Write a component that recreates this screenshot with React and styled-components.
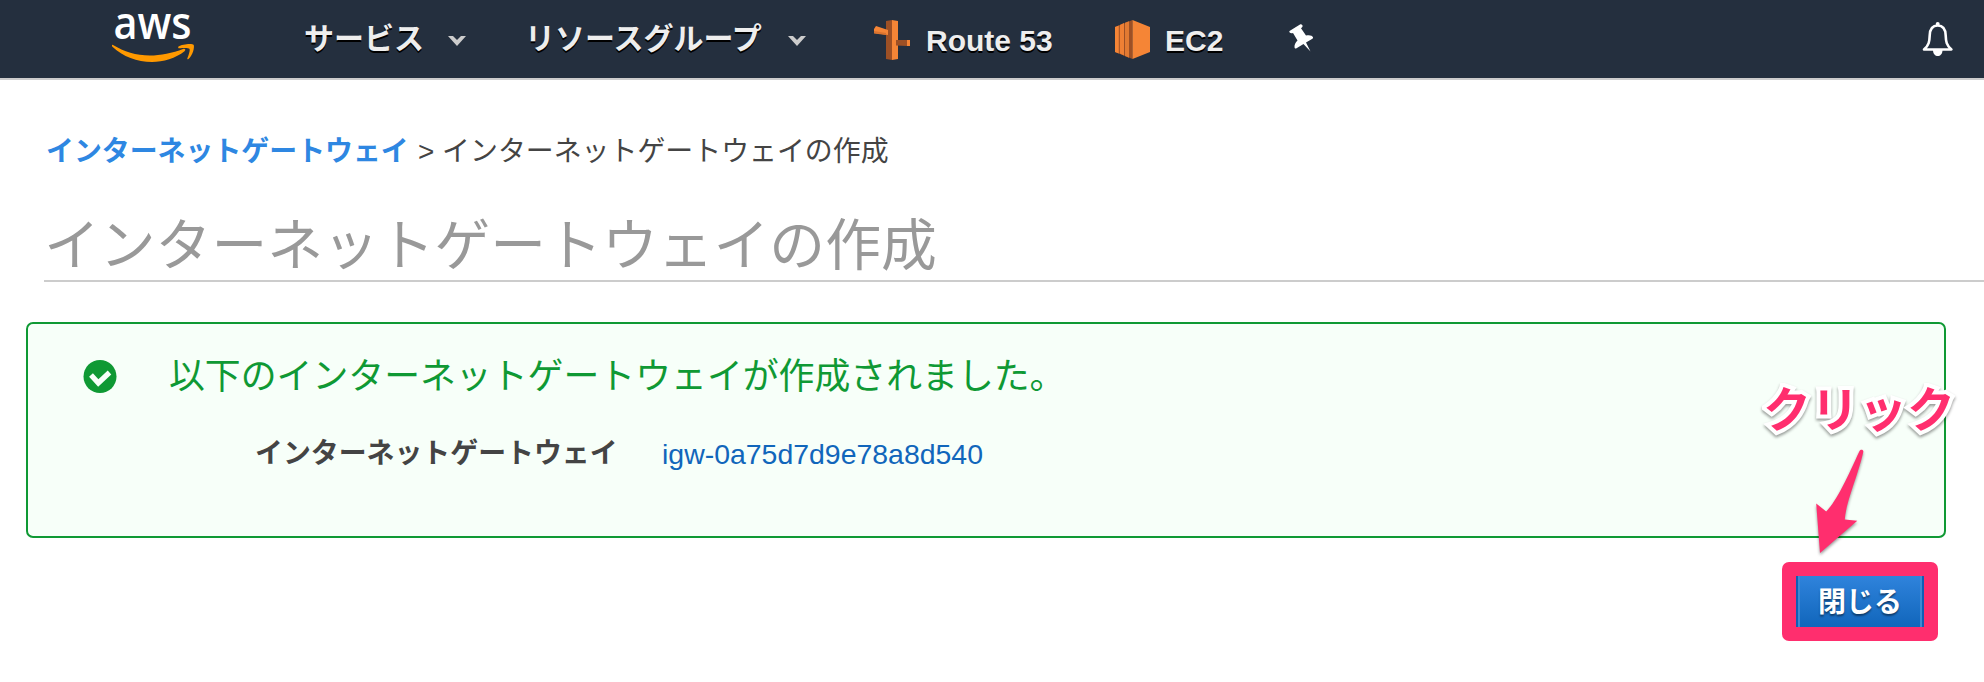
import React from "react";
import styled, { createGlobalStyle } from "styled-components";

const GlobalStyle = createGlobalStyle`
  *, *::before, *::after { box-sizing: border-box; }
  body {
    margin: 0;
    background: #fff;
    color: #444;
    font-family: "Liberation Sans", "Noto Sans CJK JP", sans-serif;
  }
`;

const Page = styled.div`
  display: flex;
  flex-direction: column;
  height: 682px;
`;

const NavBar = styled.header`
  display: flex;
  align-items: flex-start;
  height: 80px;
  flex: none;
  background: #242f3e;
  border-bottom: 2px solid #ccc;
`;

const LogoLink = styled.a`
  display: flex;
  flex-direction: column;
  margin-left: 110px;
  width: 194px;
  height: 78px;
`;

const NavItem = styled.a`
  display: flex;
  align-items: flex-start;
  color: #eee;
  font-size: 30px;
  font-weight: 700;
  line-height: 40px;
  white-space: nowrap;
  text-shadow: 0 2px 0 #000;
  padding-top: ${(p) => p.$top || 19}px;
  width: ${(p) => p.$width}px;
`;

const NavText = styled.span`
  flex: none;
`;

const ShortcutIcon = styled.svg`
  flex: none;
  margin-right: ${(p) => p.$gap}px;
`;

const ShortcutText = styled(NavText)`
  padding-top: 1px;
`;

const Caret = styled.svg`
  flex: none;
  margin: 16px 0 0 ${(p) => p.$gap}px;
`;

const PinIcon = styled.svg`
  margin-top: 22px;
`;

const BellIcon = styled.svg`
  margin: 20px 29px 0 auto;
`;

const Main = styled.main`
  display: flex;
  flex-direction: column;
`;

const Breadcrumb = styled.nav`
  display: flex;
  margin: 51px 0 0 46px;
  font-size: 27.92px;
  line-height: 42px;
  white-space: pre;
`;

const BreadcrumbLink = styled.a`
  margin-right: 1.5px;
  color: #2e87e2;
  font-weight: 700;
`;

const Title = styled.h1`
  margin: 30px 0 0 44px;
  height: 79px;
  border-bottom: 2px solid #ccc;
  color: #999;
  font-size: 55.8px;
  font-weight: 400;
  line-height: 85px;
  white-space: nowrap;
`;

const Alert = styled.section`
  display: flex;
  margin: 40px 38px 0 26px;
  height: 216px;
  padding: 26px 0 0 55px;
  background: #f7fff9;
  border: 2px solid #0f9934;
  border-radius: 7px;
`;

const CheckIcon = styled.svg`
  flex: none;
  margin: 10px 52px 0 0;
`;

const AlertBody = styled.div`
  display: flex;
  flex-direction: column;
`;

const AlertHeading = styled.h2`
  margin: 0;
  color: #0f9934;
  font-size: 35.87px;
  font-weight: 400;
  line-height: 54px;
  white-space: nowrap;
`;

const Detail = styled.div`
  display: flex;
  margin: 29px 0 0 86px;
  line-height: 42px;
  white-space: nowrap;
`;

const DetailLabel = styled.span`
  width: 407px;
  font-size: 27.9px;
  font-weight: 700;
`;

const ResourceLink = styled.a`
  color: #1166bb;
  font-size: 28.45px;
`;

const Actions = styled.footer`
  display: flex;
  justify-content: flex-end;
  padding: 24px 46px 0 0;
`;

const Highlight = styled.div`
  padding: 14px;
  border-radius: 7px;
  background: #ff2e6e;
`;

const CloseButton = styled.button`
  display: block;
  width: 128px;
  height: 51px;
  padding: 0 0 3px;
  border: 0 solid #0f5fb5;
  border-width: 0 2px;
  background: linear-gradient(#2f83dc, #1166bb);
  box-shadow: inset 2px 0 0 #3f8ad2, inset -2px 0 0 #3f8ad2;
  color: #fff;
  font: 700 28px/48px "Noto Sans CJK JP", sans-serif;
  text-shadow: 0 2px 2px rgba(0, 0, 0, 0.45);
`;

const Callout = styled.div`
  position: absolute;
  left: 1763px;
  top: 375px;
  color: #ff2e6e;
  font-size: 48px;
  font-weight: 700;
  line-height: 72px;
  white-space: nowrap;
  -webkit-text-stroke: 8px #fff;
  paint-order: stroke fill;
  stroke-linejoin: round;
  filter: drop-shadow(0 2px 1.5px rgba(0, 0, 0, 0.4));
`;

const Arrow = styled.svg`
  position: absolute;
  left: 1810px;
  top: 444px;
  filter: drop-shadow(0 2px 1.5px rgba(0, 0, 0, 0.4));
`;

const LogoText = styled.text`
  fill: #fff;
  font-family: "Open Sans", sans-serif;
  font-size: 45px;
  font-weight: 600;
`;

const Logo = () => (
  <svg width="90" height="70" viewBox="110 0 90 70" overflow="visible" role="img" aria-label="aws">
    <LogoText x="113.500" y="38.500" textLength="78" lengthAdjust="spacingAndGlyphs">
      aws
    </LogoText>
    <path
      fill="#f90"
      d="M113 45c11 6.500 23 10.500 37 10.500c10 0 23-2.500 33-6.500c2-.8 3.200.8 1.500 2.200C176 58 163 62 152 62c-15 0-29-5.500-39.600-15.300c-.9-.9-.4-2.300.6-1.700z"
    />
    <path
      fill="#f90"
      d="M178.500 46.500c3.500-2.500 14-3.500 15.200-1.600c1 2-.8 10.500-5.200 14c-.8.7-1.500.3-1.100-.6c1.200-3 3-8.200 2-9.500c-1-1.300-7-.8-10-.5c-1.200.1-1.600-1-.9-1.800z"
    />
  </svg>
);

const MenuCaret = ({ gap = 23 }) => (
  <Caret width="20" height="12" viewBox="0 0 20 12" $gap={gap}>
    <path d="M1 1h5l4 4l4-4h5l-9 10z" fill="#ccc" />
  </Caret>
);

const RouteIcon = () => (
  <ShortcutIcon width="36" height="40" viewBox="0 0 36 40" $gap={16}>
    <path d="M12 1l6-1v40l-6-1z" fill="#9d5025" />
    <path d="M18 0l6 1v38l-6 1z" fill="#f58536" />
    <path d="M2 6l12 4v5L0 13V9z" fill="#f58536" />
    <path d="M0 11l12 2v2L0 13.500z" fill="#d9732f" />
    <path d="M22 20h11v6l-11-.5z" fill="#9d5025" />
    <path d="M33 20h3v6h-3z" fill="#f58536" />
  </ShortcutIcon>
);

const Ec2Icon = () => (
  <ShortcutIcon width="35" height="39" viewBox="0 0 35 39" $gap={15}>
    <path d="M17.500 0L0 7v25l17.500 7z" fill="#9d5025" />
    <path d="M17.500 0L35 7v25l-17.500 7z" fill="#f58536" />
    <path d="M0 7l3.800-1.500v28L0 32z" fill="#f58536" />
    <path d="M4.800 5l4.200-2v32.500l-4.200-2z" fill="#ef8034" />
    <path d="M10 2.800l4-1.600v36.500L10 36z" fill="#e27a32" />
  </ShortcutIcon>
);

export default function App() {
  return (
    <>
      <GlobalStyle />
      <Page>
        <NavBar>
          <LogoLink>
            <Logo />
          </LogoLink>
          <NavItem $width={221}>
            <NavText>サービス</NavText>
            <MenuCaret />
          </NavItem>
          <NavItem $width={349}>
            <NavText>リソースグループ</NavText>
            <MenuCaret gap={25} />
          </NavItem>
          <NavItem $width={241} $top={20}>
            <RouteIcon />
            <ShortcutText>Route 53</ShortcutText>
          </NavItem>
          <NavItem $width={173} $top={20}>
            <Ec2Icon />
            <ShortcutText>EC2</ShortcutText>
          </NavItem>
          <PinIcon width="28" height="32" viewBox="1288 22 28 32">
            <path
              fill="#fff"
              d="M1289.500 31l10.500-6.500c1.500-.8 3.500 1.300 2.300 2.500l-1.300 1.200l5 7.300c3-.8 6.500-.2 7 1.700c.2.800-.3 1.300-1 1.700l-6 3.700l4.500 9l-7-7.500l-7 4.200c-1 .5-1.800.2-2-1c-.3-2.200 1-5 3-6.800l-4.500-7.500c-2 1-4.500-.5-3.500-2z"
            />
          </PinIcon>
          <BellIcon width="34" height="38" viewBox="1921 20 34 38">
            <path
              d="M1924 49.500c5-4.500 5.500-8 5.700-14c.2-6.500 2.500-10 8-10s7.800 3.500 8 10c.2 6 .7 9.500 5.700 14z"
              fill="none"
              stroke="#fff"
              strokeWidth="2.600"
              strokeLinejoin="round"
            />
            <circle cx="1937.700" cy="24" r="2" fill="#fff" />
            <path d="M1933 50h9.500c0 8-9.500 8-9.500 0z" fill="#fff" />
          </BellIcon>
        </NavBar>
        <Main>
          <Breadcrumb>
            <BreadcrumbLink>インターネットゲートウェイ</BreadcrumbLink>
            <span>{" > インターネットゲートウェイの作成"}</span>
          </Breadcrumb>
          <Title>インターネットゲートウェイの作成</Title>
          <Alert>
            <CheckIcon width="34" height="34" viewBox="0 0 34 34">
              <circle cx="17" cy="16.500" r="16.500" fill="#0f9934" />
              <path d="M8 15l7.300 8L26.500 12.500" fill="none" stroke="#f7fff9" strokeWidth="5.200" />
            </CheckIcon>
            <AlertBody>
              <AlertHeading>以下のインターネットゲートウェイが作成されました。</AlertHeading>
              <Detail>
                <DetailLabel>インターネットゲートウェイ</DetailLabel>
                <ResourceLink>igw-0a75d7d9e78a8d540</ResourceLink>
              </Detail>
            </AlertBody>
          </Alert>
          <Actions>
            <Highlight>
              <CloseButton>閉じる</CloseButton>
            </Highlight>
          </Actions>
        </Main>
        <Callout>クリック</Callout>
        <Arrow width="60" height="120" viewBox="1810 444 60 120">
          <path
            fill="#ff2e6e"
            d="M1859.500 451c1-2 4.300-1.500 3.800 1c-6 26-17 48-18.500 67.500l12.500 1.200L1820 553l-3.800-49.500l10 8c11-11 22-36 33.300-60.500z"
          />
        </Arrow>
      </Page>
    </>
  );
}
